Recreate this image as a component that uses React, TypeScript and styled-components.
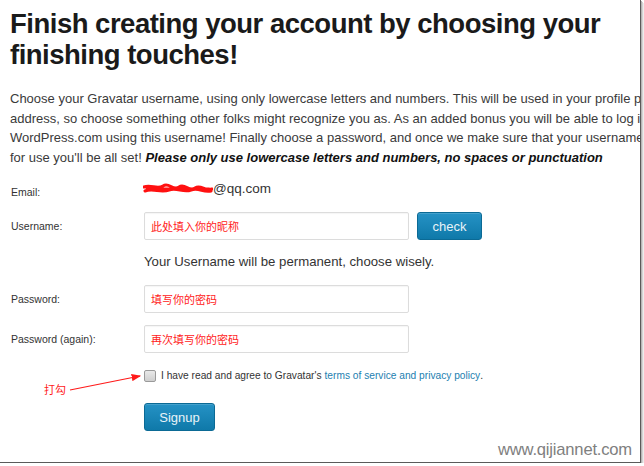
import React from "react";
import styled, { createGlobalStyle } from "styled-components";

const Global = createGlobalStyle`
  html, body { margin: 0; padding: 0; background: #ffffff; }
  body { font-family: "Liberation Sans", Arial, sans-serif; color: #333; }
`;

const Frame = styled.div`
  position: relative;
  box-sizing: border-box;
  width: 641px;
  height: 463px;
  background: #fff;
  border-right: 1px solid #5a5a5a;
  border-bottom: 1px solid #5a5a5a;
  box-shadow: 1px 1px 0 #b5b5b5, 2px 2px 0 #d4d4d4, 3px 3px 0 #ececec;
  overflow: hidden;
`;

const Content = styled.div`
  padding: 8px 0 0 10px;
  width: 700px;
`;

const Heading = styled.h1`
  margin: 0;
  font-family: "Liberation Sans", Arial, sans-serif;
  font-weight: 700;
  font-size: 27.5px;
  line-height: 31px;
  color: #1a1a1a;
  letter-spacing: -0.5px;
  width: 640px;
`;

const Intro = styled.p`
  margin: 19px 0 0 0;
  font-size: 13px;
  line-height: 19.7px;
  color: #3a3a3a;
  width: 640px;
  white-space: nowrap;
`;

const Strong = styled.em`
  font-weight: 700;
  font-style: italic;
  color: #111;
`;

const Form = styled.div`
  display: flex;
  flex-direction: column;
  margin-top: 11px;
`;

const Row = styled.div<{ $mb: number }>`
  display: flex;
  align-items: center;
  margin-bottom: ${(p) => p.$mb}px;
`;

const Label = styled.div<{ $dy?: number }>`
  box-sizing: border-box;
  width: 134px;
  flex: none;
  font-size: 10.5px;
  color: #333;
  padding-left: 1px;
  padding-top: ${(p) => p.$dy || 0}px;
`;

const Field = styled.div`
  display: flex;
  align-items: center;
  gap: 8px;
`;

const EmailValue = styled.div`
  display: flex;
  align-items: center;
  font-size: 13.5px;
  color: #333;
  height: 20px;
`;

const Scribble = styled.svg`
  display: block;
  width: 70px;
  height: 12px;
  margin-left: -1px;
`;

const Input = styled.div`
  box-sizing: border-box;
  width: 265px;
  height: 28px;
  border: 1px solid #dcdcdc;
  border-radius: 2px;
  box-shadow: inset 0 1px 1px rgba(0,0,0,0.04);
  display: flex;
  align-items: center;
  padding-left: 6px;
  font-family: "Noto Sans CJK SC", sans-serif;
  font-size: 11px;
  color: #ff2222;
`;

const Button = styled.button<{ $w: number }>`
  box-sizing: border-box;
  width: ${(p) => p.$w}px;
  height: 28px;
  border: 1px solid #0b6a95;
  border-radius: 3px;
  background: linear-gradient(#2592c5, #0f79a9);
  color: #e8f3f8;
  font-family: "Liberation Sans", Arial, sans-serif;
  font-size: 13px;
  padding: 2px 0 0 0;
  box-shadow: inset 0 1px 0 rgba(255,255,255,0.15);
`;

const Note = styled.div`
  font-size: 13.2px;
  color: #333;
  line-height: 18px;
`;

const Agree = styled.div`
  display: flex;
  align-items: center;
  font-size: 10.2px;
  color: #333;
`;

const Box = styled.span`
  box-sizing: border-box;
  width: 12px;
  height: 12px;
  border: 1px solid #9a9a9a;
  border-radius: 2px;
  background: linear-gradient(#e9e9e9, #cfcfcf);
  margin-right: 5px;
`;

const Link = styled.span`
  color: #2380b0;
  margin-left: 3px;
`;

const Annotation = styled.div`
  position: absolute;
  left: 44px;
  top: 381px;
  font-family: "Noto Sans CJK SC", sans-serif;
  font-size: 11px;
  color: #ff1a1a;
`;

const Arrow = styled.svg`
  position: absolute;
  left: 66px;
  top: 370px;
`;

const Watermark = styled.div`
  position: absolute;
  right: 8px;
  bottom: 2px;
  font-family: "Liberation Sans", Arial, sans-serif;
  font-size: 16.6px;
  color: #808080;
  letter-spacing: -0.2px;
`;

export default function App() {
  return (
    <>
      <Global />
      <Frame>
        <Content>
          <Heading>
            Finish creating your account by choosing your
            <br />
            finishing touches!
          </Heading>
          <Intro>
            Choose your Gravatar username, using only lowercase letters and numbers. This will be used in your profile page
            <br />
            address, so choose something other folks might recognize you as. As an added bonus you will be able to log in to
            <br />
            WordPress.com using this username! Finally choose a password, and once we make sure that your username is available
            <br />
            for use you'll be all set! <Strong>Please only use lowercase letters and numbers, no spaces or punctuation</Strong>
          </Intro>
          <Form>
            <Row $mb={13}>
              <Label $dy={6}>Email:</Label>
              <EmailValue>
                <Scribble viewBox="0 0 70 12">
                  <path
                    d="M1 4 C8 1 14 7 20 3 S30 8 36 4 S46 9 52 5 S62 9 69 6 M2 8 C10 5 18 10 26 7 S40 10 48 7 S60 10 68 8 M4 6 L66 6"
                    stroke="#ff1010"
                    strokeWidth="3"
                    fill="none"
                    strokeLinecap="round"
                  />
                </Scribble>
                @qq.com
              </EmailValue>
            </Row>
            <Row $mb={13}>
              <Label>Username:</Label>
              <Field>
                <Input>此处填入你的昵称</Input>
                <Button $w={65}>check</Button>
              </Field>
            </Row>
            <Row $mb={14}>
              <Label />
              <Note>Your Username will be permanent, choose wisely.</Note>
            </Row>
            <Row $mb={12}>
              <Label>Password:</Label>
              <Input>填写你的密码</Input>
            </Row>
            <Row $mb={17}>
              <Label>Password (again):</Label>
              <Input>再次填写你的密码</Input>
            </Row>
            <Row $mb={21}>
              <Label />
              <Agree>
                <Box />
                I have read and agree to Gravatar's<Link>terms of service and privacy policy</Link>.
              </Agree>
            </Row>
            <Row $mb={0}>
              <Label />
              <Button $w={71}>Signup</Button>
            </Row>
          </Form>
        </Content>
        <Annotation>打勾</Annotation>
        <Arrow width="80" height="24" viewBox="0 0 80 24">
          <defs>
            <marker id="ah" markerWidth="8" markerHeight="6" refX="7" refY="3" orient="auto">
              <path d="M0 0 L8 3 L0 6 Z" fill="#ff1a1a" />
            </marker>
          </defs>
          <line x1="4" y1="20" x2="74" y2="6" stroke="#ff1a1a" strokeWidth="1.2" markerEnd="url(#ah)" />
        </Arrow>
        <Watermark>www.qijiannet.com</Watermark>
      </Frame>
    </>
  );
}
